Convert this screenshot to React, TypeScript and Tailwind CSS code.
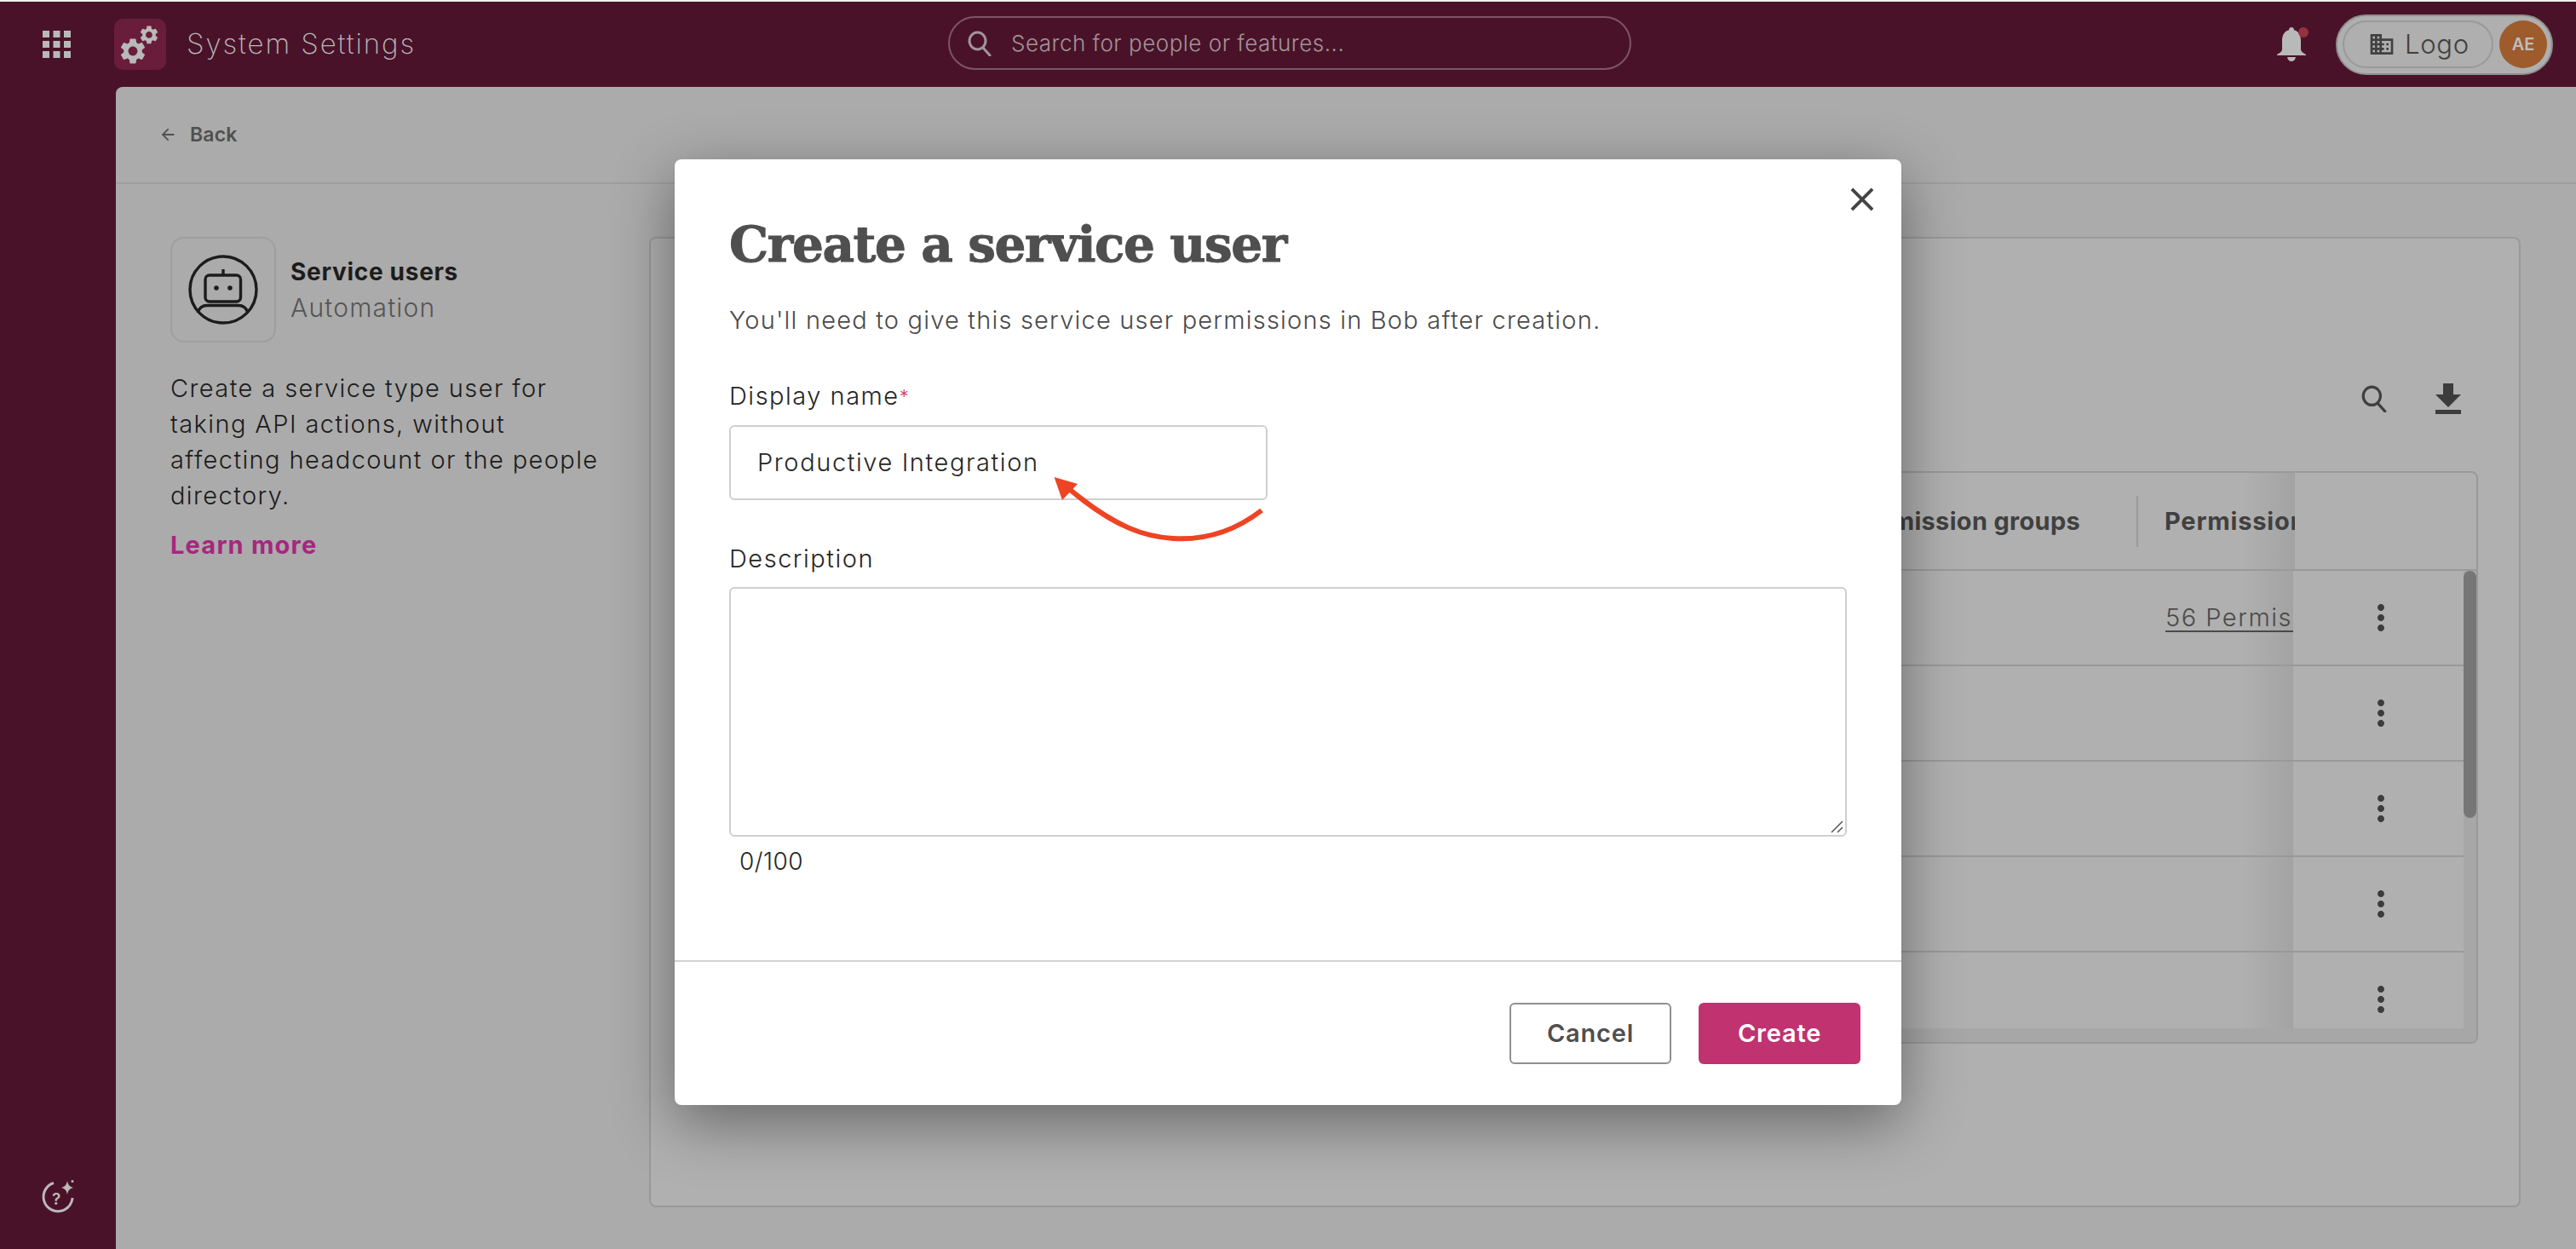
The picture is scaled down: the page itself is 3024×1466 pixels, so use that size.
import React from "react";
import { MdDomain, MdMoreVert, MdClose, MdArrowBack } from "react-icons/md";

const GEAR =
  "M19.14 12.94c.04-.3.06-.61.06-.94 0-.32-.02-.64-.07-.94l2.03-1.58c.18-.14.23-.41.12-.61l-1.92-3.32c-.12-.22-.37-.29-.59-.22l-2.39.96c-.5-.38-1.03-.7-1.62-.94l-.36-2.54c-.04-.24-.24-.41-.48-.41h-3.84c-.24 0-.43.17-.47.41l-.36 2.54c-.59.24-1.13.57-1.62.94l-2.39-.96c-.22-.08-.47 0-.59.22L2.74 8.87c-.12.21-.08.47.12.61l2.03 1.58c-.05.3-.09.63-.09.94s.02.64.07.94l-2.03 1.58c-.18.14-.23.41-.12.61l1.92 3.32c.12.22.37.29.59.22l2.39-.96c.5.38 1.03.7 1.62.94l.36 2.54c.05.24.24.41.48.41h3.84c.24 0 .44-.17.47-.41l.36-2.54c.59-.24 1.13-.56 1.62-.94l2.39.96c.22.08.47 0 .59-.22l1.92-3.32c.12-.22.07-.47-.12-.61l-2.01-1.58zM12 15.6c-1.98 0-3.6-1.62-3.6-3.6s1.62-3.6 3.6-3.6 3.6 1.62 3.6 3.6-1.62 3.6-3.6 3.6z";

function GridIcon() {
  return (
    <svg width="33" height="32" viewBox="0 0 33 32" fill="#b9b9b9">
      {[0, 12, 24].map((y) =>
        [0, 12.5, 25].map((x) => <rect key={`${x}-${y}`} x={x} y={y} width="8" height="8" />)
      )}
    </svg>
  );
}

function GearsIcon() {
  return (
    <svg width="60" height="60" viewBox="0 0 60 60" fill="#b9b9b9">
      <g transform="translate(3 20) scale(1.5)">
        <path d={GEAR} />
      </g>
      <g transform="translate(27 6) scale(1.08)">
        <path d={GEAR} />
      </g>
    </svg>
  );
}

function SearchGlyph({ size, color, sw }: { size: number; color: string; sw: number }) {
  return (
    <svg width={size} height={size} viewBox="0 0 30 30" fill="none" stroke={color} strokeWidth={sw}>
      <ellipse cx="12.5" cy="12" rx="9.5" ry="10" />
      <path d="M19 20l8 9" strokeLinecap="round" />
    </svg>
  );
}

function Bell() {
  return (
    <div className="relative w-[36px] h-[40px]">
      <svg width="34" height="40" viewBox="0 0 34 40" fill="#b9b9b9">
        <path d="M17 0c2 0 3 1.5 3 3.3C26 5 28 10 28 16v10c0 2 2 4 6 6v1H0v-1c4-2 6-4 6-6V16C6 10 8 5 14 3.3 14 1.5 15 0 17 0z" />
        <path d="M12 35h10c-.5 3-2.5 5-5 5s-4.5-2-5-5z" />
      </svg>
      <span className="absolute right-[-1px] top-0 w-[12px] h-[12px] rounded-full bg-[#97303f]" />
    </div>
  );
}

function Robot() {
  return (
    <svg width="82" height="82" viewBox="0 0 82 82" fill="none" stroke="#1c1c1c" strokeWidth="3.4">
      <circle cx="41" cy="41" r="39" />
      <rect x="20" y="24" width="41.5" height="31" rx="5" />
      <path d="M41 17v7" />
      <circle cx="33" cy="39" r="2.8" fill="#1c1c1c" stroke="none" />
      <circle cx="49" cy="39" r="2.8" fill="#1c1c1c" stroke="none" />
      <path d="M11 68c2-6 6-8.5 11-8.5h37c5 0 9 2.5 11 8.5" />
    </svg>
  );
}

function HelpIcon() {
  return (
    <svg width="42" height="40" viewBox="0 0 42 40" fill="none">
      <path d="M15 3.5A17 17 0 1 0 37 21" stroke="#b9b9b9" strokeWidth="3" />
      <path d="M31 1c1 5 3 7 7 8-4 1-6 3-7 8-1-5-3-7-7-8 4-1 6-3 7-8z" fill="#b9b9b9" />
      <circle cx="37" cy="1.5" r="1.5" fill="#b9b9b9" />
      <text x="13" y="29" fontSize="19" fontWeight="600" fill="#b9b9b9" fontFamily="Inter, sans-serif">?</text>
    </svg>
  );
}

function Arrow() {
  return (
    <svg className="absolute left-[1230px] top-[555px]" width="260" height="85" viewBox="0 0 260 85" fill="none">
      <path d="M251 44C215 72 180 79 147 77C115 75 80 65 24 18" stroke="#ee4423" strokeWidth="6" strokeLinecap="butt" />
      <path d="M7.5 5L35 13 17 32z" fill="#ee4423" />
    </svg>
  );
}

function Row({ link }: { link?: boolean }) {
  return (
    <div className="flex h-[112px] border-b-2 border-[#999999]">
      <div className="flex-1 min-w-0 flex items-center pl-[1728px] text-[#4a4a4a] bg-[linear-gradient(to_right,#b0b0b0_calc(100%-60px),#a3a3a3)]">
        {link && <span className="w-[153px] overflow-hidden whitespace-nowrap underline decoration-2 underline-offset-[5px] text-[29px] tracking-[1.5px] font-light">56 Permissions</span>}
      </div>
      <div className="w-[200px] flex items-center pl-[79px] text-[#3c3c3c]">
        <MdMoreVert size={48} />
      </div>
    </div>
  );
}

export default function App() {
  return (
    <div className="relative w-[3024px] h-[1466px] overflow-hidden bg-[#4a1228] [font-family:Inter,sans-serif] flex flex-col">
      <div className="h-[2px] bg-[#eeeeee] shrink-0" />
      {/* Header */}
      <header className="h-[100px] shrink-0 flex items-center pl-[50px] pr-[27px]">
        <GridIcon />
        <div className="ml-[51px] w-[61px] h-[60px] rounded-[10px] bg-[#691d3b] flex items-center justify-center">
          <GearsIcon />
        </div>
        <span className="ml-[24px] w-[894px] text-[33px] font-extralight text-[#b9b9b9] tracking-[1.9px]">System Settings</span>
        <div className="w-[802px] h-[63px] rounded-full border-2 border-[#7f5468] flex items-center pl-[20px] mt-[-3px]">
          <SearchGlyph size={30} color="#a0959a" sw={3} />
          <span className="ml-[22px] text-[#a0959a] text-[26px] font-light tracking-[0.5px]">Search for people or features...</span>
        </div>
        <div className="ml-auto mr-[33px]">
          <Bell />
        </div>
        <div className="w-[255px] h-[71px] rounded-full bg-[#afafaf] border-2 border-[#8f8f8f] flex items-center pl-[6px] gap-[7px]">
          <div className="w-[177px] h-[56px] rounded-full border-2 border-[#999999] flex items-center pl-[28px] gap-[11px] text-[#404040]">
            <MdDomain size={32} />
            <span className="text-[31px] font-light tracking-[0.7px]">Logo</span>
          </div>
          <div className="w-[56px] h-[56px] rounded-full bg-[#9e5b2b] flex items-center justify-center text-[#bdbdbd] text-[20px] font-semibold">
            AE
          </div>
        </div>
      </header>

      <div className="flex-1 flex min-h-0">
        {/* Sidebar */}
        <aside className="w-[136px] shrink-0 flex flex-col justify-end items-start pl-[48px] pb-[41px]">
          <HelpIcon />
        </aside>

        {/* Main */}
        <main className="flex-1 min-w-0 bg-[#ababab] rounded-tl-[8px] flex flex-col">
          <div className="h-[114px] shrink-0 border-b-2 border-[#9e9e9e] flex items-center pl-[50px] gap-[15px] text-[#505050]">
            <MdArrowBack size={22} />
            <span className="text-[23px] font-semibold tracking-[0.2px]">Back</span>
          </div>

          <div className="flex pl-[64px] pt-[62px]">
            {/* Left column */}
            <div className="w-[562px] shrink-0">
              <div className="flex items-center">
                <div className="w-[124px] h-[124px] rounded-[16px] border-2 border-[#9e9e9e] flex items-center justify-center">
                  <Robot />
                </div>
                <div className="ml-[17px]">
                  <div className="text-[28px] leading-[42px] font-bold text-[#1c1c1c] tracking-[0.7px]">Service users</div>
                  <div className="text-[30px] leading-[42px] font-light text-[#555555] tracking-[1.2px]">Automation</div>
                </div>
              </div>
              <p className="mt-[33px] w-[525px] text-[29px] leading-[42px] font-light text-[#1c1c1c] tracking-[1.4px]">
                Create a service type user for taking API actions, without affecting headcount or the people directory.
              </p>
              <div className="mt-[16px] text-[29px] leading-[42px] font-bold text-[#a5277f] tracking-[1.2px]">Learn more</div>
            </div>

            {/* Panel */}
            <div className="w-[2197px] h-[1139px] shrink-0 rounded-[8px] border-2 border-[#999999] bg-[#b0b0b0] px-[48px] pt-[170px] relative">
              <div className="absolute top-[170px] right-[68px] flex items-center gap-[56px]">
                <SearchGlyph size={32} color="#3f3f3f" sw={3} />
                <svg width="30" height="36" viewBox="0 0 30 36" fill="#3c3c3c">
                  <path d="M9 0h12v13h9L15 28 0 13h9z" />
                  <rect y="31" width="30" height="5" />
                </svg>
              </div>
              <div className="h-[672px] rounded-[8px] border-2 border-[#999999] overflow-hidden flex flex-col mt-[103px]">
                {/* Table head */}
                <div className="h-[115px] shrink-0 border-b-2 border-[#999999] flex">
                  <div className="flex-1 min-w-0 flex items-center justify-end text-[29px] font-bold text-[#404040] tracking-[0.3px] overflow-hidden bg-[linear-gradient(to_right,#b0b0b0_calc(100%-60px),#a3a3a3)]">
                    <span className="whitespace-nowrap pr-[66px]">Permission groups</span>
                    <span className="w-[2px] h-[60px] bg-[#999999] shrink-0" />
                    <span className="w-[184px] shrink-0 pl-[31px] overflow-hidden whitespace-nowrap tracking-[0.8px]">Permissions</span>
                  </div>
                  <div className="w-[213px] shrink-0" />
                </div>
                {/* Body */}
                <div className="flex-1 min-h-0 flex">
                  <div className="flex-1 min-w-0 overflow-hidden">
                    <Row link />
                    <Row />
                    <Row />
                    <Row />
                    <Row />
                  </div>
                  <div className="w-[15px] shrink-0 bg-[#a7a7a7]">
                    <div className="h-[290px] rounded-full bg-[#767676]" />
                  </div>
                </div>
                <div className="h-[16px] shrink-0 bg-[#a7a7a7]" />
              </div>
            </div>
          </div>
        </main>
      </div>

      {/* Modal */}
      <div className="absolute inset-x-0 top-[187px] flex justify-center">
        <div className="w-[1440px] h-[1110px] bg-white rounded-[8px] shadow-[0_20px_70px_rgba(0,0,0,0.42)] flex flex-col relative">
          <button className="absolute right-[23px] top-[24px] text-[#444444]">
            <MdClose size={46} />
          </button>
          <div className="flex-1 px-[64px] pt-[60px]">
            <h1 className="[font-family:'DejaVu_Serif',serif] font-bold text-[58px] leading-[80px] tracking-[-1.4px] [-webkit-text-stroke:1px_#4f4f4f] text-[#4f4f4f]">Create a service user</h1>
            <p className="mt-[29px] text-[29px] leading-[40px] font-light text-[#4a4a4a] tracking-[1.2px]">
              You'll need to give this service user permissions in Bob after creation.
            </p>
            <div className="mt-[49px] text-[29px] leading-[40px] font-light text-[#262626] tracking-[1.5px]">
              Display name<span className="text-[#d4375e] text-[22px] align-top">*</span>
            </div>
            <div className="mt-[14px] w-[632px] h-[88px] rounded-[6px] border-2 border-[#cfcfcf] flex items-center pl-[31px] text-[29px] font-light text-[#262626] tracking-[1.6px]">
              Productive Integration
            </div>
            <div className="mt-[49px] text-[29px] leading-[40px] font-light text-[#262626] tracking-[1.5px]">Description</div>
            <div className="mt-[13px] h-[293px] rounded-[6px] border-2 border-[#cfcfcf] flex items-end justify-end p-[2px]">
              <svg width="16" height="16" viewBox="0 0 16 16" stroke="#555555" strokeWidth="1.5">
                <path d="M2 15L15 2M9 15l6-6" />
              </svg>
            </div>
            <div className="mt-[9px] pl-[12px] text-[28px] leading-[40px] font-light text-[#262626] tracking-[0.5px]">0/100</div>
          </div>
          <div className="h-[170px] shrink-0 border-t-2 border-[#d2d2d2] flex items-start justify-end gap-[32px] pt-[48px] pr-[48px]">
            <button className="w-[190px] h-[72px] rounded-[6px] border-2 border-[#8f8f8f] bg-white text-[#4f4f4f] text-[29px] font-semibold tracking-[0.8px]">Cancel</button>
            <button className="w-[190px] h-[72px] rounded-[6px] bg-[#c03270] text-white text-[29px] font-semibold tracking-[0.8px]">Create</button>
          </div>
        </div>
      </div>
      <Arrow />
    </div>
  );
}
